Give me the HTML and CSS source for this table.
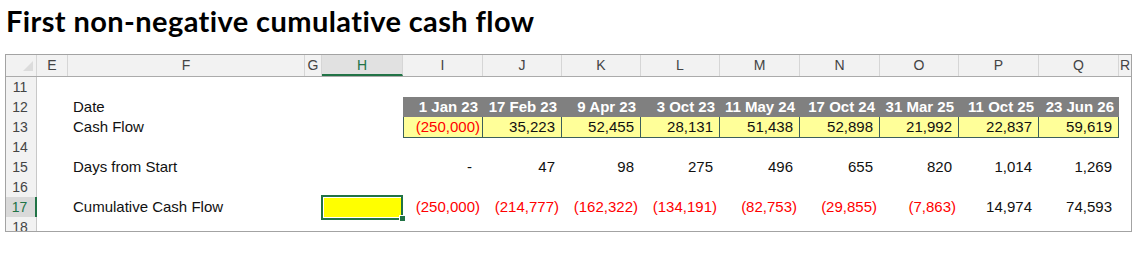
FILE: index.html
```html
<!DOCTYPE html>
<html>
<head>
<meta charset="utf-8">
<link rel="stylesheet" href="styles.css">
</head>
<body>
<div class="title">First non-negative cumulative cash flow</div>
<div class="sheet">
  <div class="row hdr">
    <div class="corner"><svg width="12" height="12" viewBox="0 0 12 12"><polygon points="11,1 11,11 1,11" fill="#dcdcdc"/></svg></div>
    <div class="ch">E</div><div class="ch">F</div><div class="ch">G</div><div class="ch sel">H</div><div class="ch">I</div><div class="ch">J</div><div class="ch">K</div><div class="ch">L</div><div class="ch">M</div><div class="ch">N</div><div class="ch">O</div><div class="ch">P</div><div class="ch">Q</div><div class="ch end">R</div>
  </div>
  <div class="row">
    <div class="rh">11</div><div></div><div></div><div></div><div></div><div></div><div></div><div></div><div></div><div></div><div></div><div></div><div></div><div></div><div></div>
  </div>
  <div class="row">
    <div class="rh">12</div><div></div><div class="label">Date</div><div></div><div></div>
    <div class="dt">1 Jan 23</div><div class="dt">17 Feb 23</div><div class="dt">9 Apr 23</div><div class="dt">3 Oct 23</div><div class="dt">11 May 24</div><div class="dt">17 Oct 24</div><div class="dt">31 Mar 25</div><div class="dt">11 Oct 25</div><div class="dt">23 Jun 26</div><div></div>
  </div>
  <div class="row">
    <div class="rh">13</div><div></div><div class="label">Cash Flow</div><div></div><div></div>
    <div class="in first neg">(250,000)</div><div class="in pos">35,223</div><div class="in pos">52,455</div><div class="in pos">28,131</div><div class="in pos">51,438</div><div class="in pos">52,898</div><div class="in pos">21,992</div><div class="in pos">22,837</div><div class="in pos">59,619</div><div></div>
  </div>
  <div class="row">
    <div class="rh">14</div><div></div><div></div><div></div><div></div><div></div><div></div><div></div><div></div><div></div><div></div><div></div><div></div><div></div><div></div>
  </div>
  <div class="row">
    <div class="rh">15</div><div></div><div class="label">Days from Start</div><div></div><div></div>
    <div class="num dash">-</div><div class="num pos">47</div><div class="num pos">98</div><div class="num pos">275</div><div class="num pos">496</div><div class="num pos">655</div><div class="num pos">820</div><div class="num pos">1,014</div><div class="num pos">1,269</div><div></div>
  </div>
  <div class="row">
    <div class="rh">16</div><div></div><div></div><div></div><div></div><div></div><div></div><div></div><div></div><div></div><div></div><div></div><div></div><div></div><div></div>
  </div>
  <div class="row">
    <div class="rh active">17</div><div></div><div class="label">Cumulative Cash Flow</div><div></div>
    <div class="picked"><div class="fill"></div><div class="frame"></div><div class="handle"></div></div>
    <div class="num neg">(250,000)</div><div class="num neg">(214,777)</div><div class="num neg">(162,322)</div><div class="num neg">(134,191)</div><div class="num neg">(82,753)</div><div class="num neg">(29,855)</div><div class="num neg">(7,863)</div><div class="num pos">14,974</div><div class="num pos">74,593</div><div></div>
  </div>
  <div class="row short">
    <div class="rh">18</div><div></div><div></div><div></div><div></div><div></div><div></div><div></div><div></div><div></div><div></div><div></div><div></div><div></div><div></div>
  </div>
</div>
</body>
</html>
```
FILE: styles.css
```css
* { box-sizing: border-box; }
body {
  margin: 0;
  background: #ffffff;
  font-family: "Liberation Sans", Arial, sans-serif;
}
.title {
  height: 54px;
  padding: 4px 0 0 6px;
  font-family: Lato, "Open Sans", sans-serif;
  font-weight: 700;
  font-size: 29px;
  line-height: 34px;
  color: #000;
  letter-spacing: 0.4px;
}
.sheet {
  margin-left: 5px;
  width: 1127px;
  height: 178px;
  border: 1px solid #a3a3a3;
  overflow: hidden;
}
.row {
  display: grid;
  grid-template-columns: 31px 31px 237px 17px 81px 80px 79px 79px 79px 80px 80px 79px 80px 80px 12px;
  height: 20px;
  font-size: 15px;
  line-height: 20px;
  color: #111;
}
.row.short { height: 14px; }
.row.hdr {
  height: 22px;
  line-height: 21px;
  font-size: 14px;
  color: #444;
  background: #f2f2f2;
  border-bottom: 1px solid #ababab;
}
.corner {
  display: flex;
  align-items: flex-end;
  justify-content: flex-end;
  padding: 0 2px 4px 0;
  border-right: 1px solid #d6d6d6;
}
.ch {
  text-align: center;
  border-right: 1px solid #d6d6d6;
  overflow: hidden;
  white-space: nowrap;
}
.ch.end { border-right: none; }
.ch.sel {
  background: #e1e1e1;
  color: #217346;
  border-bottom: 2px solid #217346;
}
.rh {
  background: #f2f2f2;
  border-right: 1px solid #c8c8c8;
  border-bottom: 1px solid #dcdcdc;
  text-align: center;
  font-size: 14px;
  color: #444;
  padding-right: 2px;
}
.rh.active {
  background: #d9d9d9;
  color: #217346;
  border-right: 2px solid #217346;
}
.label {
  padding-left: 5px;
  white-space: nowrap;
}
.dt {
  background: #808080;
  color: #ffffff;
  font-weight: 700;
  text-align: right;
  padding-right: 5px;
  white-space: nowrap;
}
.in {
  background: #ffff99;
  border-right: 1px solid #3b5f5b;
  border-bottom: 1px solid #3b5f5b;
  text-align: right;
  line-height: 19px;
  white-space: nowrap;
}
.in.first { border-left: 1px solid #3b5f5b; }
.num {
  text-align: right;
  white-space: nowrap;
}
.pos { padding-right: 7px; }
.neg { padding-right: 3px; color: #ff0000; }
.in.neg { padding-right: 2px; }
.in.pos { padding-right: 6px; }
.dash { padding-right: 11px; }
.picked { position: relative; }
.picked .fill {
  position: absolute;
  left: 2px; top: 1px; right: 2px; bottom: 1px;
  background: #ffff00;
}
.picked .frame {
  position: absolute;
  left: -1px; top: -2px; right: 0; bottom: -2px;
  border: 2px solid #217346;
}
.picked .handle {
  position: absolute;
  right: -3px; bottom: -4px;
  width: 7px; height: 7px;
  background: #217346;
  border: 1px solid #ffffff;
}
```
